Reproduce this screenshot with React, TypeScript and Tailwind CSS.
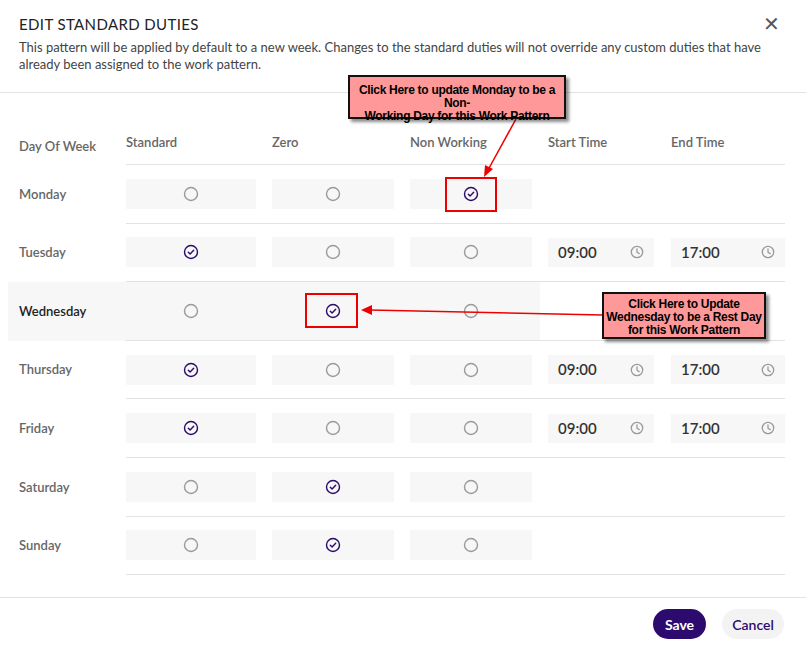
import React from 'react';

type Sel = 'std' | 'zero' | 'nw';

interface Day {
    name: string;
    sel: Sel;
    times: boolean;
    highlight?: boolean;
}

const days: Day[] = [
    { name: 'Monday', sel: 'nw', times: false },
    { name: 'Tuesday', sel: 'std', times: true },
    { name: 'Wednesday', sel: 'zero', times: false, highlight: true },
    { name: 'Thursday', sel: 'std', times: true },
    { name: 'Friday', sel: 'std', times: true },
    { name: 'Saturday', sel: 'zero', times: false },
    { name: 'Sunday', sel: 'zero', times: false },
];

const Radio = ({ on }: { on: boolean }) =>
    on ? (
        <svg width="16" height="16" viewBox="0 0 16 16">
            <circle cx="8" cy="8" r="6.5" fill="none" stroke="#2b0a6b" strokeWidth="1.4" />
            <path d="M5.3 8.2l1.8 1.8 3.6-3.8" fill="none" stroke="#2b0a6b" strokeWidth="1.4" strokeLinecap="round" strokeLinejoin="round" />
        </svg>
    ) : (
        <svg width="16" height="16" viewBox="0 0 16 16">
            <circle cx="8" cy="8" r="6.5" fill="none" stroke="#9a9a9a" strokeWidth="1.4" />
        </svg>
    );

const Clock = () => (
    <svg width="14" height="14" viewBox="0 0 14 14">
        <circle cx="7" cy="7" r="5.7" fill="none" stroke="#9a9a9a" strokeWidth="1.3" />
        <path d="M7 4v3.2l2.2 1.4" fill="none" stroke="#9a9a9a" strokeWidth="1.3" strokeLinecap="round" />
    </svg>
);

const Cell = ({ on, w }: { on: boolean; w: string }) => (
    <div className={`${w} h-[30px] bg-[#f7f7f7] flex items-center justify-center`}>
        <Radio on={on} />
    </div>
);

const Time = ({ value, w }: { value: string; w: string }) => (
    <div className={`${w} h-[29px] bg-[#f7f7f7] flex items-center justify-between pl-[10px] pr-[10px] text-[15px] text-[#333]`}>
        <span>{value}</span>
        <Clock />
    </div>
);

const Callout = ({ className, children }: { className: string; children: React.ReactNode }) => (
    <div
        className={`absolute bg-[#ff9999] border-2 border-[#111] shadow-[3px_3px_3px_rgba(0,0,0,0.45)] text-center text-[12px] leading-[13px] font-bold text-black tracking-tight ${className}`}
        style={{ fontFamily: '"Liberation Sans Narrow","Liberation Sans",Arial,sans-serif' }}
    >
        {children}
    </div>
);

export default function App() {
    return (
        <div className="relative w-[806px] h-[646px] bg-white text-[#555]" style={{ fontFamily: 'Lato, "Open Sans", sans-serif' }}>
            <div className="px-[19px] pt-[13px] h-[93px] border-b border-[#e2e2e2]">
                <div className="flex justify-between items-start">
                    <h2 className="text-[15px] text-[#222] tracking-wide">EDIT STANDARD DUTIES</h2>
                    <span className="text-[#556] text-[20px] leading-[20px] mr-[7px]">✕</span>
                </div>
                <p className="mt-[3px] text-[13px] leading-[17px] text-[#444] w-[750px]">
                    This pattern will be applied by default to a new week. Changes to the standard duties will not override any custom duties that have already been assigned to the work pattern.
                </p>
            </div>

            <div className="pt-[37px] pl-[8px] h-[504px] text-[13px] font-semibold">
                <div className="flex items-center h-[35px] border-b border-transparent">
                    <div className="w-[118px] pl-[11px] text-[#666]">Day Of Week</div>
                    <div className="flex items-center text-[#666] w-[659px] border-b border-[#e2e2e2] h-[35px] pb-[8px]">
                        <span className="w-[146px]">Standard</span>
                        <span className="w-[138px]">Zero</span>
                        <span className="w-[138px]">Non Working</span>
                        <span className="w-[123px]">Start Time</span>
                        <span>End Time</span>
                    </div>
                </div>
                {days.map((d) => (
                    <div
                        key={d.name}
                        className={`flex items-stretch h-[58.6px] ${d.highlight ? 'bg-[linear-gradient(to_right,#f7f7f7_532px,transparent_532px)]' : ''}`}
                    >
                        <div className={`w-[118px] pl-[11px] flex items-center ${d.highlight ? 'text-[#222]' : 'text-[#666]'}`}>{d.name}</div>
                        <div className="w-[659px] border-b border-[#e2e2e2] flex items-center">
                            <div className="flex items-center gap-[16px]">
                                <Cell on={d.sel === 'std'} w="w-[130px]" />
                                <Cell on={d.sel === 'zero'} w="w-[122px]" />
                                <Cell on={d.sel === 'nw'} w="w-[122px]" />
                                {d.times && (
                                    <>
                                        <Time value="09:00" w="w-[106px]" />
                                        <Time value="17:00" w="w-[114px] ml-[1px]" />
                                    </>
                                )}
                            </div>
                        </div>
                    </div>
                ))}
            </div>

            <div className="absolute left-0 right-0 top-[597px] border-t border-[#e2e2e2] flex justify-end items-center gap-[16px] pr-[22px] pt-[11px]">
                <button className="h-[30px] w-[53px] rounded-full bg-[#2d0a6e] text-white text-[14px] font-bold">Save</button>
                <button className="h-[30px] w-[62px] rounded-full bg-[#f3f3f3] text-[#2d0a6e] text-[14px] font-semibold">Cancel</button>
            </div>

            {/* annotations */}
            <div className="absolute left-[445px] top-[177px] w-[52px] h-[35px] border-2 border-[#e00]" />
            <div className="absolute left-[305px] top-[293px] w-[53px] h-[35px] border-2 border-[#e00]" />
            <svg className="absolute left-0 top-0 pointer-events-none" width="806" height="646">
                <line x1="516" y1="119" x2="488" y2="170" stroke="#e00" strokeWidth="1.5" />
                <polygon points="484,177 485,165 493,169" fill="#e00" />
                <line x1="603" y1="315" x2="370" y2="310" stroke="#e00" strokeWidth="1.5" />
                <polygon points="361,310 372,305 372,315" fill="#e00" />
            </svg>
            <Callout className="left-[348px] top-[75px] w-[218px] h-[44px] pt-[7px]">
                Click Here to update Monday to be a Non-
                <br />
                Working Day for this Work Pattern
            </Callout>
            <Callout className="left-[602px] top-[292px] w-[164px] h-[47px] pt-[4px]">
                Click Here to Update
                <br />
                Wednesday to be a Rest Day
                <br />
                for this Work Pattern
            </Callout>
        </div>
    );
}
